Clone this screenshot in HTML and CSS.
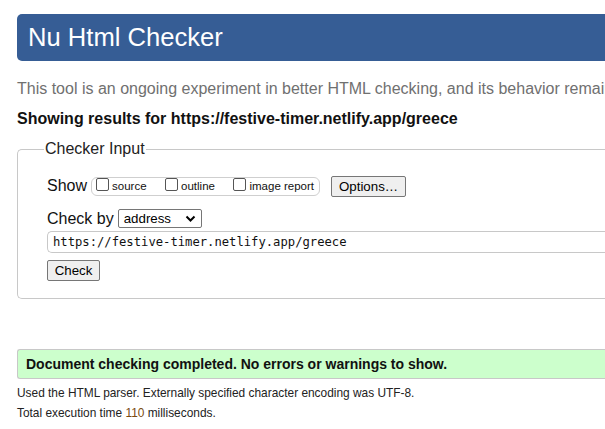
FILE: index.html
```html
<!DOCTYPE html>
<html>
<head>
<meta charset="utf-8">
<title>Nu Html Checker</title>
<link rel="stylesheet" href="styles.css">
</head>
<body>
<div class="page">
  <h1 class="banner">Nu Html Checker</h1>
  <p class="intro">This tool is an ongoing experiment in better HTML checking, and its behavior remains subject to change</p>
  <p class="showing">Showing results for https://festive-timer.netlify.app/greece</p>
  <fieldset class="checker">
    <legend class="legend">Checker Input</legend>
    <div class="row show-row">
      <span class="label">Show</span>
      <span class="group">
        <label class="opt"><span class="box"></span>source</label>
        <label class="opt"><span class="box"></span>outline</label>
        <label class="opt"><span class="box"></span>image report</label>
      </span>
      <span class="btn options">Options…</span>
    </div>
    <div class="row by-row">
      <span class="label">Check by</span>
      <span class="select">address<svg class="chev" width="11" height="8" viewBox="0 0 11 8"><path d="M1.5 1.5 L5.5 5.5 L9.5 1.5" fill="none" stroke="#000" stroke-width="2"/></svg></span>
    </div>
    <div class="url">https://festive-timer.netlify.app/greece</div>
    <div class="row"><span class="btn check">Check</span></div>
  </fieldset>
  <p class="success">Document checking completed. No errors or warnings to show.</p>
  <p class="details">Used the HTML parser. Externally specified character encoding was UTF-8.</p>
  <p class="details">Total execution time <span class="num">110</span> milliseconds.</p>
</div>
</body>
</html>
```
FILE: styles.css
```css
html, body {
  margin: 0;
  padding: 0;
  overflow: hidden;
  background: #fff;
}
body {
  font-family: Arial, "Liberation Sans", sans-serif;
  color: #000;
}
.page {
  width: 1000px;
  padding: 14px 0 0 17px;
}
.banner {
  margin: 0;
  height: 47px;
  background: #365d95;
  color: #fff;
  font-weight: normal;
  font-size: 25.6px;
  line-height: 47px;
  padding-left: 11px;
  border-radius: 5px 0 0 5px;
}
.intro {
  margin: 19px 0 0;
  font-size: 16px;
  line-height: 18px;
  color: #707070;
}
.showing {
  margin: 12px 0 0;
  font-size: 16px;
  line-height: 18px;
  font-weight: bold;
  color: #111;
}
.checker {
  margin: 12px 0 0;
  border: 1px solid #c8c8c8;
  border-right: none;
  border-radius: 5px 0 0 5px;
  padding: 18px 0 17px 29px;
}
.legend {
  padding: 0 1px;
  margin-left: -3px;
  font-size: 16px;
  color: #222;
}
.row {
  display: flex;
  align-items: center;
}
.label {
  font-size: 16px;
  color: #111;
}
.show-row {
  height: 20px;
}
.group {
  display: flex;
  align-items: center;
  margin-left: 4px;
  height: 17px;
  border: 1px solid #cfcfcf;
  border-radius: 6px;
  padding: 0 5px 0 4px;
  width: 218px;
  justify-content: space-between;
}
.opt {
  display: flex;
  align-items: center;
  font-size: 11.5px;
  color: #111;
  line-height: 17px;
}
.box {
  width: 11px;
  height: 11px;
  border: 1px solid #555;
  border-radius: 2px;
  margin-right: 3px;
  margin-top: -3px;
  background: #fff;
}
.btn {
  display: inline-flex;
  align-items: center;
  justify-content: center;
  background: #efefef;
  border: 1px solid #767676;
  border-radius: 2px;
  font-size: 13.3px;
  color: #000;
  box-sizing: border-box;
}
.options {
  margin-left: 11px;
  width: 75px;
  height: 21px;
}
.by-row {
  margin-top: 13px;
}
.select {
  display: inline-flex;
  align-items: center;
  justify-content: space-between;
  margin-left: 4px;
  width: 84px;
  height: 19px;
  box-sizing: border-box;
  border: 1px solid #767676;
  border-radius: 2px;
  padding: 0 5px 0 5px;
  font-size: 13.3px;
}
.url {
  margin-top: 3px;
  height: 22px;
  box-sizing: border-box;
  border: 1px solid #c8c8c8;
  border-right: none;
  border-radius: 5px 0 0 5px;
  padding-left: 5px;
  font-family: "DejaVu Sans Mono", "Liberation Mono", monospace;
  font-size: 12.2px;
  line-height: 20px;
  color: #111;
}
.check {
  margin-top: 7px;
  width: 53px;
  height: 21px;
  font-size: 13.3px;
}
.success {
  margin: 50px 0 0;
  height: 30px;
  box-sizing: border-box;
  background: #ccffcc;
  border: 1px solid #c8c8c8;
  border-right: none;
  border-radius: 3px 0 0 3px;
  padding-left: 8px;
  font-weight: bold;
  font-size: 14px;
  line-height: 28px;
  color: #111;
}
.details {
  margin: 7px 0 0;
  font-size: 11.9px;
  line-height: 14px;
  color: #222;
}
.details + .details {
  margin-top: 6px;
}
.num {
  color: #7a4a10;
}
```
